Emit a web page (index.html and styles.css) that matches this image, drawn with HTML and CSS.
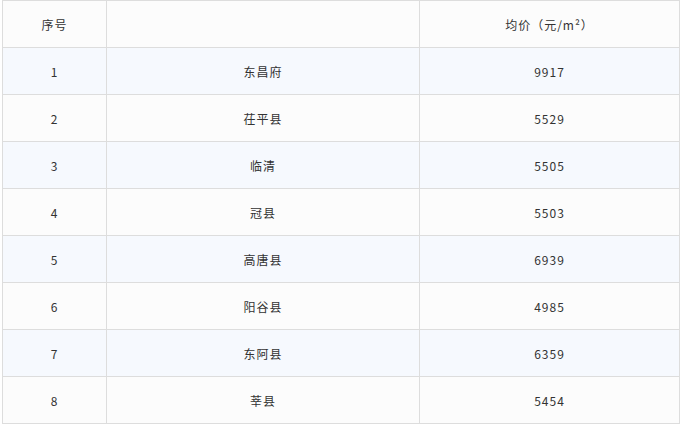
FILE: index.html
```html
<!DOCTYPE html>
<html lang="zh">
<head>
<meta charset="utf-8">
<link rel="stylesheet" href="styles.css">
</head>
<body>
<table class="price-table">
  <colgroup>
    <col class="c1"><col class="c2"><col class="c3">
  </colgroup>
  <thead>
    <tr><th>序号</th><th></th><th>均价（元/m²）</th></tr>
  </thead>
  <tbody>
    <tr class="alt"><td>1</td><td>东昌府</td><td>9917</td></tr>
    <tr><td>2</td><td>茌平县</td><td>5529</td></tr>
    <tr class="alt"><td>3</td><td>临清</td><td>5505</td></tr>
    <tr><td>4</td><td>冠县</td><td>5503</td></tr>
    <tr class="alt"><td>5</td><td>高唐县</td><td>6939</td></tr>
    <tr><td>6</td><td>阳谷县</td><td>4985</td></tr>
    <tr class="alt"><td>7</td><td>东阿县</td><td>6359</td></tr>
    <tr><td>8</td><td>莘县</td><td>5454</td></tr>
  </tbody>
</table>
</body>
</html>
```
FILE: styles.css
```css
html, body {
  margin: 0;
  padding: 0;
  background: #ffffff;
}
.price-table {
  margin-left: 2px;
  border-collapse: collapse;
  table-layout: fixed;
  width: 677px;
  font-family: "Noto Sans CJK SC", "Noto Sans", sans-serif;
  font-size: 12px;
  color: #333333;
  letter-spacing: 1px;
}
.c1 { width: 104px; }
.c2 { width: 313px; }
.c3 { width: 260px; }
.price-table th,
.price-table td {
  border: 1px solid #dddddd;
  height: 47px;
  padding: 2px 0 0 0;
  text-align: center;
  vertical-align: middle;
  font-weight: normal;
  background: #fcfcfc;
  box-sizing: border-box;
  line-height: 16px;
}
.price-table tr.alt td {
  background: #f6f9fe;
}
```
